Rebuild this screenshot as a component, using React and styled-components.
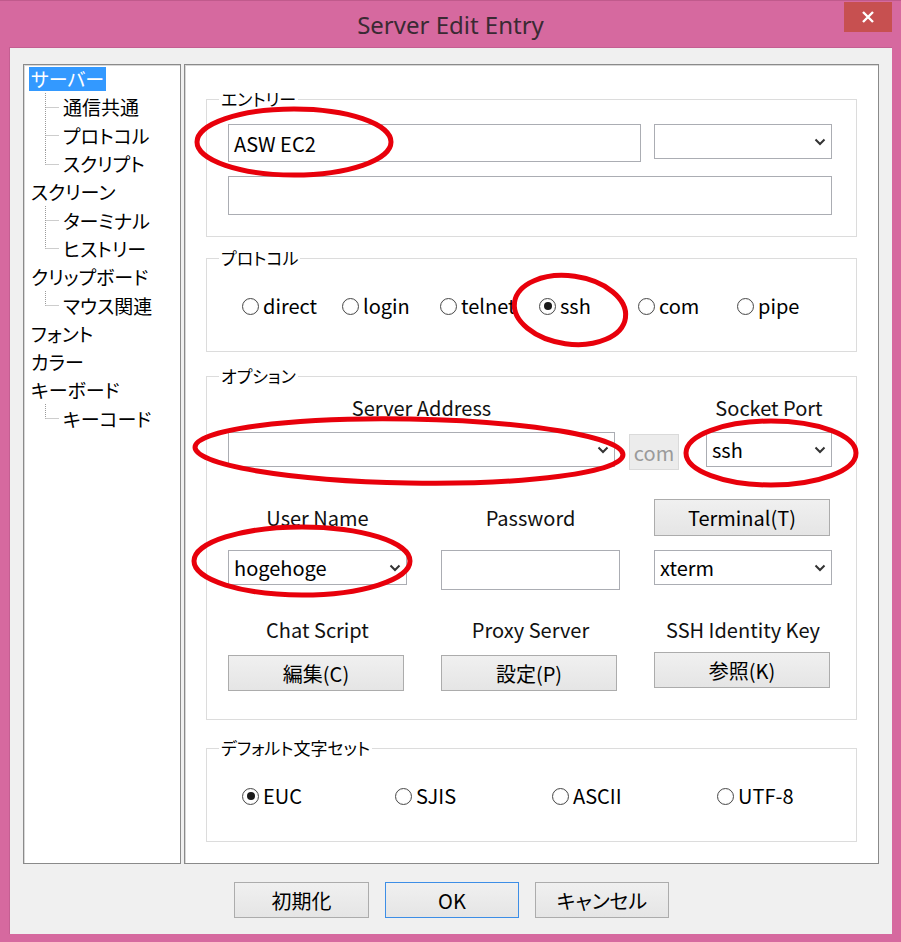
import React from "react";
import styled, { createGlobalStyle } from "styled-components";

const GlobalStyle = createGlobalStyle`
  html, body {
    margin: 0;
    padding: 0;
    background: #d6699f;
  }
  body {
    font-family: "Noto Sans CJK JP", "Noto Sans", sans-serif;
    font-feature-settings: "palt";
    color: #000;
  }
`;

const Window = styled.div`
  position: relative;
  width: 901px;
  height: 942px;
  box-sizing: border-box;
  background: #d6699f;
  border-top: 1px solid #c05a8c;
  padding: 0 9px 9px 9px;
  display: flex;
  flex-direction: column;
`;

const TitleBar = styled.div`
  height: 46px;
  display: grid;
  grid-template-columns: 48px 1fr 48px;
  align-items: start;
`;

const Title = styled.div`
  grid-column: 2;
  text-align: center;
  font-family: "Noto Sans", "Open Sans", sans-serif;
  font-size: 24px;
  line-height: 48px;
  color: #3a2a33;
`;

const CloseButton = styled.div`
  grid-column: 3;
  width: 48px;
  height: 30px;
  margin-top: 1px;
  background: #c75050;
  display: flex;
  align-items: center;
  justify-content: center;
`;

const Client = styled.div`
  flex: 1;
  background: #f0f0f0;
  padding: 16px 13px 16px 13px;
  display: flex;
  flex-direction: column;
  border-left: 1px solid #c45f92;
  border-top: 1px solid #c45f92;
`;

const Body = styled.div`
  height: 800px;
  display: flex;
  gap: 3px;
`;

const Panel = styled.div`
  box-sizing: border-box;
  height: 100%;
  background: #fff;
  border: 1px solid #8a8a8a;
  box-shadow: inset 1px 1px 0 #d8d8d8;
`;

const TreePanel = styled(Panel)`
  flex: 0 0 158px;
  padding: 0 0 0 5px;
  overflow: hidden;
`;

const ContentPanel = styled(Panel)`
  flex: 1;
  min-width: 0;
  padding: 24px 21px 0 21px;
`;

const TreeRow = styled.div`
  display: flex;
  align-items: center;
  height: 28.3px;
  font-size: 19px;
  white-space: nowrap;
  padding-left: ${(p) => (p.$child ? 16 : 0)}px;
`;

const TreeLabel = styled.span`
  line-height: 24px;
  padding: 0 2px;
  background: ${(p) => (p.$selected ? "#3399ff" : "transparent")};
  color: ${(p) => (p.$selected ? "#fff" : "#000")};
`;

const Group = styled.fieldset`
  margin: ${(p) => p.$mt || 0}px 0 0 0;
  padding: ${(p) => p.$pt}px 24px ${(p) => p.$pb}px 21px;
  border: 1px solid #dcdcdc;
  min-width: 0;
`;

const Legend = styled.legend`
  font-size: 17px;
  line-height: 20px;
  padding: 0 2px;
  margin-left: -9px;
`;

const Row = styled.div`
  display: flex;
  align-items: flex-start;
  gap: ${(p) => p.$gap || 0}px;
  margin-top: ${(p) => p.$mt || 0}px;
`;

const Field = styled.div`
  box-sizing: border-box;
  width: ${(p) => p.$w}px;
  height: ${(p) => p.$h}px;
  border: 1px solid #abadb3;
  background: #fff;
  display: flex;
  align-items: center;
  justify-content: space-between;
  padding: 0 5px 0 5px;
  font-size: 20px;
`;

const DisabledBox = styled.div`
  box-sizing: border-box;
  width: 51px;
  height: 36px;
  margin: 38px 27px 0 14px;
  background: #ececec;
  border: 1px solid #dadada;
  color: #9a9a9a;
  font-size: 20px;
  display: flex;
  align-items: center;
  justify-content: center;
`;

const Column = styled.div`
  width: ${(p) => p.$w}px;
  display: flex;
  flex-direction: column;
  gap: 12px;
`;

const Label = styled.div`
  text-align: center;
  font-size: 20px;
  line-height: 24px;
  color: #111;
  align-self: center;
`;

const Grid = styled.div`
  display: grid;
  grid-template-columns: 179px 179px 178px;
  grid-template-rows: ${(p) => p.$rows};
  justify-content: space-between;
  row-gap: ${(p) => p.$rowGap}px;
  align-items: start;
  margin-top: ${(p) => p.$mt}px;
`;

const Button = styled.button`
  box-sizing: border-box;
  width: ${(p) => p.$w || 176}px;
  height: ${(p) => p.$h || 36}px;
  font-family: inherit;
  font-feature-settings: "palt";
  font-size: 20px;
  color: #000;
  background: linear-gradient(#f0f0f0, #e5e5e5);
  border: 1px solid ${(p) => (p.$default ? "#3d8ee6" : "#acacac")};
  padding: 0;
  margin-top: ${(p) => p.$mt || 0}px;
`;

const RadioRow = styled.div`
  display: grid;
  grid-template-columns: ${(p) => p.$cols};
  height: 30px;
  align-items: center;
  padding-left: 14px;
`;

const RadioItem = styled.div`
  display: flex;
  align-items: center;
  gap: 4px;
  font-size: 20px;
  line-height: 26px;
`;

const RadioCircle = styled.span`
  box-sizing: border-box;
  width: 17px;
  height: 17px;
  border-radius: 50%;
  border: 1px solid #4a4a4a;
  background: radial-gradient(circle, #fff 55%, #e4e4e4 100%);
  display: flex;
  align-items: center;
  justify-content: center;
  &::after {
    content: "";
    width: 8px;
    height: 8px;
    border-radius: 50%;
    background: ${(p) => (p.$checked ? "#1a1a1a" : "transparent")};
  }
`;

const Footer = styled.div`
  display: flex;
  gap: 16px;
  margin-top: 18px;
  padding-left: 211px;
`;

const Marks = styled.svg`
  position: absolute;
  left: 0;
  top: 0;
  pointer-events: none;
`;

const Chevron = () => (
  <svg width="12" height="8" viewBox="0 0 12 8">
    <polyline points="1.5,1.5 6,6 10.5,1.5" fill="none" stroke="#333" strokeWidth="2" />
  </svg>
);

const Connector = ({ last }) => (
  <svg width="16" height="29" viewBox="0 0 16 29">
    <line x1="0.5" y1="0" x2="0.5" y2={last ? 14.5 : 29} stroke="#9a9a9a" strokeDasharray="1 1" />
    <line x1="0.5" y1="14.5" x2="14" y2="14.5" stroke="#9a9a9a" strokeDasharray="1 1" />
  </svg>
);

const tree = [
  { label: "サーバー", selected: true },
  { label: "通信共通", child: true },
  { label: "プロトコル", child: true },
  { label: "スクリプト", child: true, last: true },
  { label: "スクリーン" },
  { label: "ターミナル", child: true },
  { label: "ヒストリー", child: true, last: true },
  { label: "クリップボード" },
  { label: "マウス関連", child: true, last: true },
  { label: "フォント" },
  { label: "カラー" },
  { label: "キーボード" },
  { label: "キーコード", child: true, last: true },
];

const protocols = ["direct", "login", "telnet", "ssh", "com", "pipe"];
const charsets = ["EUC", "SJIS", "ASCII", "UTF-8"];

const Radio = ({ label, checked }) => (
  <RadioItem>
    <RadioCircle $checked={checked} />
    <span>{label}</span>
  </RadioItem>
);

const App = () => {
  return (
    <>
      <GlobalStyle />
      <Window>
        <TitleBar>
          <Title>Server Edit Entry</Title>
          <CloseButton>
            <svg width="14" height="14" viewBox="0 0 14 14">
              <path d="M2 2 L12 12 M12 2 L2 12" stroke="#fff" strokeWidth="2.4" />
            </svg>
          </CloseButton>
        </TitleBar>
        <Client>
          <Body>
            <TreePanel>
              {tree.map((t) => (
                <TreeRow key={t.label} $child={t.child}>
                  {t.child && <Connector last={t.last} />}
                  <TreeLabel $selected={t.selected}>{t.label}</TreeLabel>
                </TreeRow>
              ))}
            </TreePanel>
            <ContentPanel>
              <Group $pt={15} $pb={21}>
                <Legend>エントリー</Legend>
                <Row $gap={13}>
                  <Field $w={414} $h={38}>ASW EC2</Field>
                  <Field $w={178} $h={35}>
                    <span />
                    <Chevron />
                  </Field>
                </Row>
                <Row $mt={14}>
                  <Field $w={605} $h={39} />
                </Row>
              </Group>

              <Group $mt={11} $pt={23} $pb={30}>
                <Legend>プロトコル</Legend>
                <RadioRow $cols="100px 98px 99px 99px 99px 99px">
                  {protocols.map((p) => (
                    <Radio key={p} label={p} checked={p === "ssh"} />
                  ))}
                </RadioRow>
              </Group>

              <Group $mt={14} $pt={10} $pb={28}>
                <Legend>オプション</Legend>
                <Row>
                  <Column $w={387}>
                    <Label>Server Address</Label>
                    <Field $w={387} $h={35}>
                      <span />
                      <Chevron />
                    </Field>
                  </Column>
                  <DisabledBox>com</DisabledBox>
                  <Column $w={126}>
                    <Label>Socket Port</Label>
                    <Field $w={126} $h={35}>
                      ssh
                      <Chevron />
                    </Field>
                  </Column>
                </Row>
                <Grid $rows="37px 40px" $rowGap={14} $mt={29}>
                  <Label>User Name</Label>
                  <Label>Password</Label>
                  <Button $w={176} $h={37}>Terminal(T)</Button>
                  <Field $w={179} $h={35}>
                    hogehoge
                    <Chevron />
                  </Field>
                  <Field $w={179} $h={40} />
                  <Field $w={178} $h={35}>
                    xterm
                    <Chevron />
                  </Field>
                </Grid>
                <Grid $rows="24px 36px" $rowGap={13} $mt={28}>
                  <Label>Chat Script</Label>
                  <Label>Proxy Server</Label>
                  <Label>SSH Identity Key</Label>
                  <Button>編集(C)</Button>
                  <Button>設定(P)</Button>
                  <Button $mt={-3}>参照(K)</Button>
                </Grid>
              </Group>

              <Group $mt={18} $pt={23} $pb={30}>
                <Legend>デフォルト文字セット</Legend>
                <RadioRow $cols="153px 157px 165px auto">
                  {charsets.map((c) => (
                    <Radio key={c} label={c} checked={c === "EUC"} />
                  ))}
                </RadioRow>
              </Group>
            </ContentPanel>
          </Body>
          <Footer>
            <Button $w={135}>初期化</Button>
            <Button $w={134} $default>OK</Button>
            <Button $w={134}>キャンセル</Button>
          </Footer>
        </Client>
        <Marks width="901" height="942" viewBox="0 0 901 942">
          <g fill="none" stroke="#e8000b" strokeWidth="5">
            <ellipse cx="294" cy="141" rx="97" ry="33" />
            <ellipse cx="570" cy="309" rx="56" ry="34" transform="rotate(8 570 309)" />
            <ellipse cx="409" cy="450" rx="214" ry="32" transform="rotate(1 409 450)" />
            <ellipse cx="771" cy="452" rx="85" ry="32" />
            <ellipse cx="302" cy="560" rx="108" ry="34" />
          </g>
        </Marks>
      </Window>
    </>
  );
};

export default App;
